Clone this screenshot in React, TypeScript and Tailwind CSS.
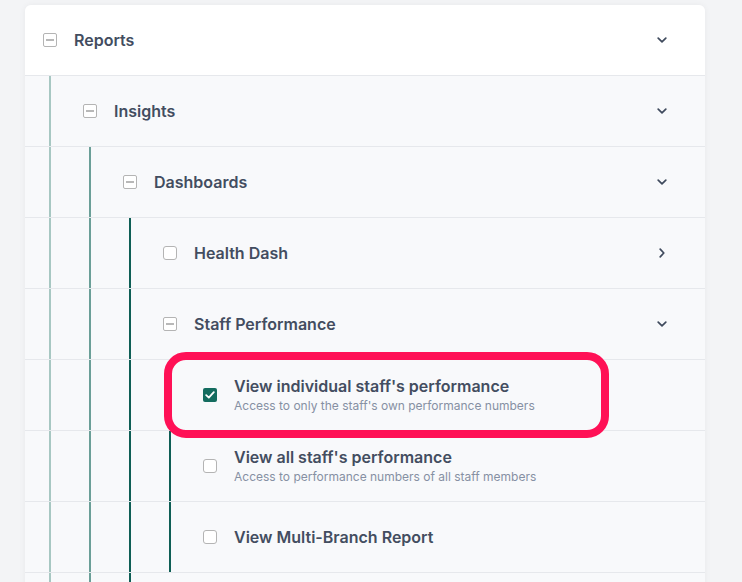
import React from "react";

type State = "indeterminate" | "checked" | "unchecked";
type Row = {
  level: number;
  label?: string;
  desc?: string;
  state?: State;
  chevron?: "down" | "right";
  highlight?: boolean;
};

const rows: Row[] = [
  { level: 0, label: "Reports", state: "indeterminate", chevron: "down" },
  { level: 1, label: "Insights", state: "indeterminate", chevron: "down" },
  { level: 2, label: "Dashboards", state: "indeterminate", chevron: "down" },
  { level: 3, label: "Health Dash", state: "unchecked", chevron: "right" },
  { level: 3, label: "Staff Performance", state: "indeterminate", chevron: "down" },
  {
    level: 4,
    label: "View individual staff's performance",
    desc: "Access to only the staff's own performance numbers",
    state: "checked",
    highlight: true,
  },
  {
    level: 4,
    label: "View all staff's performance",
    desc: "Access to performance numbers of all staff members",
    state: "unchecked",
  },
  { level: 4, label: "View Multi-Branch Report", state: "unchecked" },
  { level: 3 },
];

const guideColors = ["bg-[#a7c7c2]", "bg-[#6b9f98]", "bg-[#0f5e55]", "bg-[#0f5e55]"];

function Box({ state }: { state: State }) {
  if (state === "checked") {
    return (
      <div className="w-[14px] h-[14px] rounded-[2px] bg-[#146c5f] flex items-center justify-center shrink-0">
        <svg width="10" height="8" viewBox="0 0 10 8" fill="none">
          <path d="M1.2 4.2L3.8 6.6L8.8 1.2" stroke="white" strokeWidth="1.8" strokeLinecap="round" strokeLinejoin="round" />
        </svg>
      </div>
    );
  }
  if (state === "indeterminate") {
    return (
      <div className="w-[14px] h-[14px] rounded-[2px] border border-[#b4b4b4] bg-white flex items-center justify-center shrink-0">
        <div className="w-[8px] h-[2px] bg-[#b8b8b8]" />
      </div>
    );
  }
  return <div className="w-[14px] h-[14px] rounded-[3px] border border-[#b4b4b4] bg-white shrink-0" />;
}

function Chevron({ dir }: { dir: "down" | "right" }) {
  return (
    <div className="w-4 h-4 flex items-center justify-center">
      {dir === "down" ? (
        <svg width="10" height="6" viewBox="0 0 10 6" fill="none">
          <path d="M1.2 1.2L5 4.8L8.8 1.2" stroke="#3f4a5d" strokeWidth="1.7" strokeLinecap="round" strokeLinejoin="round" />
        </svg>
      ) : (
        <svg width="6" height="10" viewBox="0 0 6 10" fill="none">
          <path d="M1.2 1.2L4.8 5L1.2 8.8" stroke="#3f4a5d" strokeWidth="1.7" strokeLinecap="round" strokeLinejoin="round" />
        </svg>
      )}
    </div>
  );
}

export default function App() {
  return (
    <div
      className="min-h-screen bg-[#f3f4f6] pt-[5px] pl-[25px]"
      style={{ fontFamily: "Inter, 'Noto Sans', sans-serif" }}
    >
      <div className="w-[680px] rounded-t-[6px] shadow-[0_0_6px_rgba(0,0,0,0.05)]">
        {rows.map((r, i) => (
          <div
            key={i}
            className={`relative flex items-stretch ${
              i === 0
                ? "h-[70px] bg-white rounded-t-[6px]"
                : "h-[71px] border-t border-[#e6e8ec] bg-[#f8f9fb]"
            }`}
          >
            {Array.from({ length: r.level }).map((_, g) => (
              <div key={g} className="w-10 shrink-0 flex">
                <div className={`ml-6 w-[2px] ${guideColors[g]}`} />
              </div>
            ))}
            {r.label && r.state && (
              <div className="flex-1 flex items-center">
                <div className="ml-[18px]">
                  <Box state={r.state} />
                </div>
                <div className="ml-[17px] flex-1">
                  <div className="text-[16px] leading-5 font-semibold text-[#434d60]">{r.label}</div>
                  {r.desc && (
                    <div className="mt-[2px] text-[12px] leading-4 text-[#8690a3]">{r.desc}</div>
                  )}
                </div>
                {r.chevron && (
                  <div className="mr-[35px]">
                    <Chevron dir={r.chevron} />
                  </div>
                )}
              </div>
            )}
            {r.highlight && (
              <div className="absolute z-10 left-[139px] top-[-8px] w-[445px] h-[86px] rounded-[22px] border-[8px] border-[#ff1156] pointer-events-none" />
            )}
          </div>
        ))}
      </div>
    </div>
  );
}
